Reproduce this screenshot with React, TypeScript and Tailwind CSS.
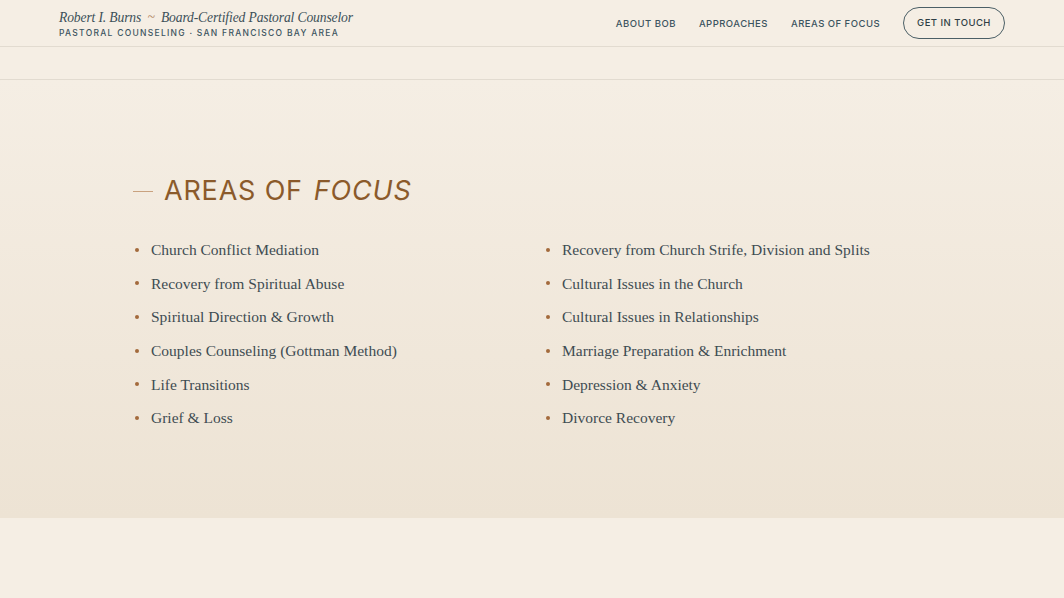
import React from 'react';

const leftItems = [
  'Church Conflict Mediation',
  'Recovery from Spiritual Abuse',
  'Spiritual Direction & Growth',
  'Couples Counseling (Gottman Method)',
  'Life Transitions',
  'Grief & Loss',
];

const rightItems = [
  'Recovery from Church Strife, Division and Splits',
  'Cultural Issues in the Church',
  'Cultural Issues in Relationships',
  'Marriage Preparation & Enrichment',
  'Depression & Anxiety',
  'Divorce Recovery',
];

const serif = { fontFamily: '"Liberation Serif", "DejaVu Serif", serif' };
const sans = { fontFamily: 'Inter, "Liberation Sans", sans-serif' };

function FocusList({ items }: { items: string[] }) {
  return (
    <ul className="flex flex-col gap-[12px]">
      {items.map((item) => (
        <li key={item} className="flex items-center h-[21.6px]">
          <span className="w-[4px] h-[4px] rounded-full bg-[#a36a3c] ml-[2px] mr-[12px]" />
          <span className="text-[15.5px] text-[#3e4c52]" style={serif}>{item}</span>
        </li>
      ))}
    </ul>
  );
}

export default function App() {
  return (
    <div className="min-h-screen bg-[#f5eee4]">
      <header className="h-[47px] border-b border-[#e2dbd0] flex items-center justify-between pl-[59px] pr-[59px]">
        <div className="flex flex-col">
          <div className="text-[13.6px] italic tracking-[-0.01em] text-[#3c5058] leading-[18px] mt-[1px]" style={serif}>
            Robert I. Burns <span className="text-[#b08360] mx-[3px]">~</span> Board-Certified Pastoral Counselor
          </div>
          <div className="text-[8.5px] tracking-[0.15em] text-[#3c5460] font-medium leading-[10px] mt-[1px]" style={sans}>
            PASTORAL COUNSELING · SAN FRANCISCO BAY AREA
          </div>
        </div>
        <nav className="flex items-center text-[9.5px] tracking-[0.05em] text-[#3c5460] font-medium pt-[2px]" style={sans}>
          <a className="mr-[23px]">ABOUT BOB</a>
          <a className="mr-[23px]">APPROACHES</a>
          <a className="mr-[23px]">AREAS OF FOCUS</a>
          <a className="h-[32px] w-[102px] flex items-center justify-center rounded-full border border-[#4b5f66] text-[#2f3e44] -mt-[2px]">GET IN TOUCH</a>
        </nav>
      </header>
      <div className="h-[33px] border-b border-[#e2dbd0]" />
      <section className="h-[438px] bg-gradient-to-b from-[#f5eee4] to-[#ede3d4] pl-[133px] pt-[94px]">
        <h2 className="flex items-center text-[27px] tracking-[0.03em] text-[#8b5a2b] leading-[34px]" style={sans}>
          <span className="w-[20px] h-[1px] bg-[#c9a27f] mr-[11px]" />
          AREAS OF <em className="ml-[11px]">FOCUS</em>
        </h2>
        <div className="grid grid-cols-[411px_1fr] mt-[31px]">
          <FocusList items={leftItems} />
          <FocusList items={rightItems} />
        </div>
      </section>
    </div>
  );
}
